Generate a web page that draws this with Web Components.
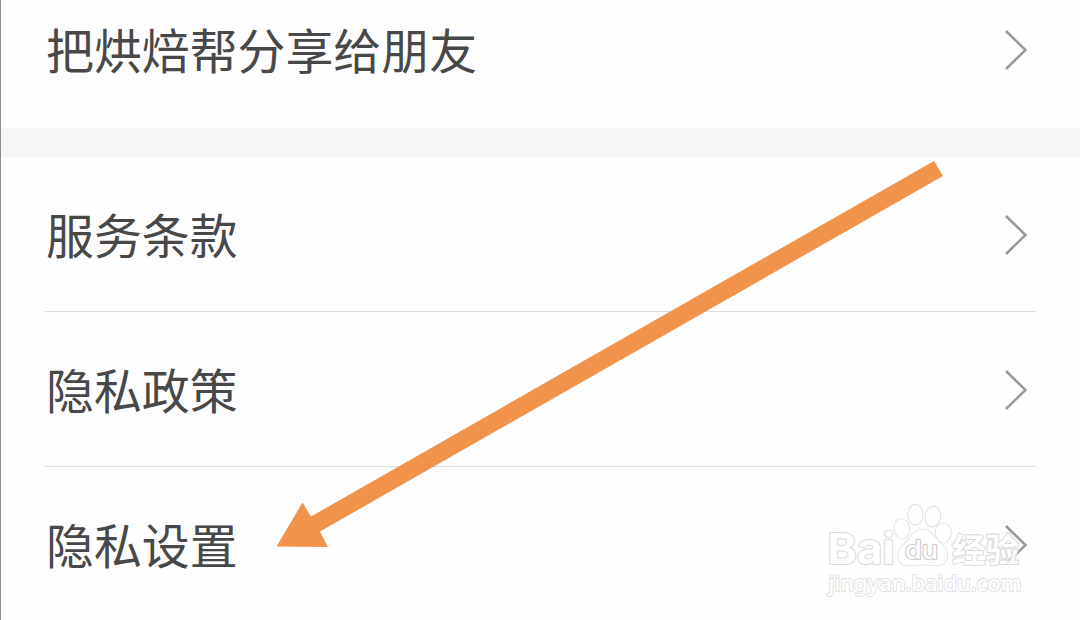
<!DOCTYPE html>
<html lang="zh-CN">
<head>
<meta charset="utf-8">
<title>设置</title>
<style>
    html, body {
        margin: 0;
        height: 100%;
        overflow: hidden;
        background: #fefefe;
    }
</style>
</head>
<body>
<settings-page>
    <settings-group class="first">
        <settings-row>把烘焙帮分享给朋友</settings-row>
    </settings-group>
    <settings-group>
        <settings-row divider>服务条款</settings-row>
        <settings-row divider>隐私政策</settings-row>
        <settings-row>隐私设置</settings-row>
    </settings-group>
    <pointer-arrow slot="overlay"></pointer-arrow>
    <site-watermark slot="overlay"></site-watermark>
</settings-page>

<script>
class SettingsPage extends HTMLElement {
    connectedCallback() {
        this.attachShadow({ mode: "open" });
        this.render();
    }

    render() {
        this.shadowRoot.innerHTML = `
            <style>
                :host {
                    display: block;
                    position: relative;
                    box-sizing: border-box;
                    width: 1080px;
                    height: 620px;
                    overflow: hidden;
                    border-left: 1px solid #8f8f8f;
                    background: #fefefe;
                    color: #484848;
                    font-family: "Noto Sans CJK SC", sans-serif;
                }
                .list {
                    display: flex;
                    flex-direction: column;
                    gap: 29px;
                    background: #f5f6f8;
                }
            </style>
            <div class="list"><slot></slot></div>
            <slot name="overlay"></slot>
        `;
    }
}

class SettingsGroup extends HTMLElement {
    connectedCallback() {
        this.attachShadow({ mode: "open" });
        this.render();
    }

    render() {
        this.shadowRoot.innerHTML = `
            <style>
                :host {
                    display: block;
                    padding: 0 44px;
                    background: #fefefe;
                }
                /* the first group is scrolled partly out of view */
                :host(.first) {
                    margin-top: -28px;
                    padding-bottom: 1px;
                }
            </style>
            <slot></slot>
        `;
    }
}

class SettingsRow extends HTMLElement {
    connectedCallback() {
        this.attachShadow({ mode: "open" });
        this.render();
    }

    render() {
        this.shadowRoot.innerHTML = `
            <style>
                :host {
                    display: flex;
                    align-items: center;
                    justify-content: space-between;
                    box-sizing: border-box;
                    height: 155px;
                    padding: 0 8px 0 1px;
                    border-bottom: 1px solid transparent;
                }
                :host([divider]) {
                    border-bottom-color: #dcdcdc;
                }
                .label {
                    padding-bottom: 2px;
                    font-size: 47.9px;
                    line-height: 70px;
                    white-space: nowrap;
                }
                svg {
                    display: block;
                    width: 24px;
                    height: 42px;
                    padding-top: 1px;
                }
            </style>
            <span class="label"><slot></slot></span>
            <svg viewBox="0 0 24 42">
                <path d="M2 2 L21.5 21 L2 40" fill="none" stroke="#999" stroke-width="2.5"/>
            </svg>
        `;
    }
}

class PointerArrow extends HTMLElement {
    connectedCallback() {
        this.attachShadow({ mode: "open" });
        this.render();
    }

    render() {
        this.shadowRoot.innerHTML = `
            <style>
                :host {
                    position: absolute;
                    top: 0;
                    left: -1px;
                }
                svg { display: block; }
            </style>
            <svg width="1080" height="620" viewBox="0 0 1080 620">
                <path d="M934 161 L943 176 L320 531.5 L328 547 L276.5 546.5 L302.5 502.5 L311 516.5 Z" fill="#f2934b"/>
            </svg>
        `;
    }
}

class SiteWatermark extends HTMLElement {
    connectedCallback() {
        this.attachShadow({ mode: "open" });
        this.render();
    }

    render() {
        this.shadowRoot.innerHTML = `
            <style>
                :host {
                    position: absolute;
                    left: 809px;
                    top: 490px;
                }
                svg {
                    display: block;
                    opacity: .85;
                }
                text, .paw {
                    fill: #fff;
                    stroke: #d6d6d6;
                    stroke-width: 2.2;
                    stroke-linejoin: round;
                    paint-order: stroke;
                }
                text {
                    font-family: Inter, "Noto Sans CJK SC", sans-serif;
                    font-weight: bold;
                }
                .paw { stroke-width: 1.6; }
                .du { stroke: #c4c4c4; font-weight: 500; }
                .url {
                    font-family: "Noto Sans", sans-serif;
                    font-weight: 500;
                    stroke: #dcdcdc;
                    stroke-width: 2;
                }
            </style>
            <svg width="240" height="120" viewBox="0 0 240 120">
                <text x="17.500" y="74" font-size="43" textLength="67" lengthAdjust="spacingAndGlyphs">Bai</text>
                <g class="paw">
                    <ellipse cx="91.7" cy="38.7" rx="7.3" ry="9.8" transform="rotate(-8 91.7 38.7)"/>
                    <ellipse cx="105.4" cy="24.8" rx="7.2" ry="10"/>
                    <ellipse cx="122.8" cy="26.5" rx="7.3" ry="10" transform="rotate(10 122.8 26.5)"/>
                    <ellipse cx="133.3" cy="42.8" rx="7.6" ry="9.5"/>
                    <path d="M112.5 39.5 C105 39.5 102 45 98.500 49.500 C95 54 88 57.500 88 65 C88 71.500 92.500 75.500 98 75.500 C103 75.500 107 74.500 112.500 74.500 C118 74.500 122 75.500 127 75.500 C133 75.500 137.300 71.500 137.300 65 C137.300 58 131 54 127 49.500 C123 45 120 39.500 112.500 39.500 Z"/>
                </g>
                <text class="du" x="95" y="69" font-size="25" textLength="33" lengthAdjust="spacingAndGlyphs">du</text>
                <text x="142" y="71.500" font-size="33" textLength="67" lengthAdjust="spacingAndGlyphs">经验</text>
                <text class="url" x="18.500" y="100.500" font-size="22.500" textLength="193" lengthAdjust="spacingAndGlyphs">jingyan.baidu.com</text>
            </svg>
        `;
    }
}

customElements.define("settings-page", SettingsPage);
customElements.define("settings-group", SettingsGroup);
customElements.define("settings-row", SettingsRow);
customElements.define("pointer-arrow", PointerArrow);
customElements.define("site-watermark", SiteWatermark);
</script>
</body>
</html>
